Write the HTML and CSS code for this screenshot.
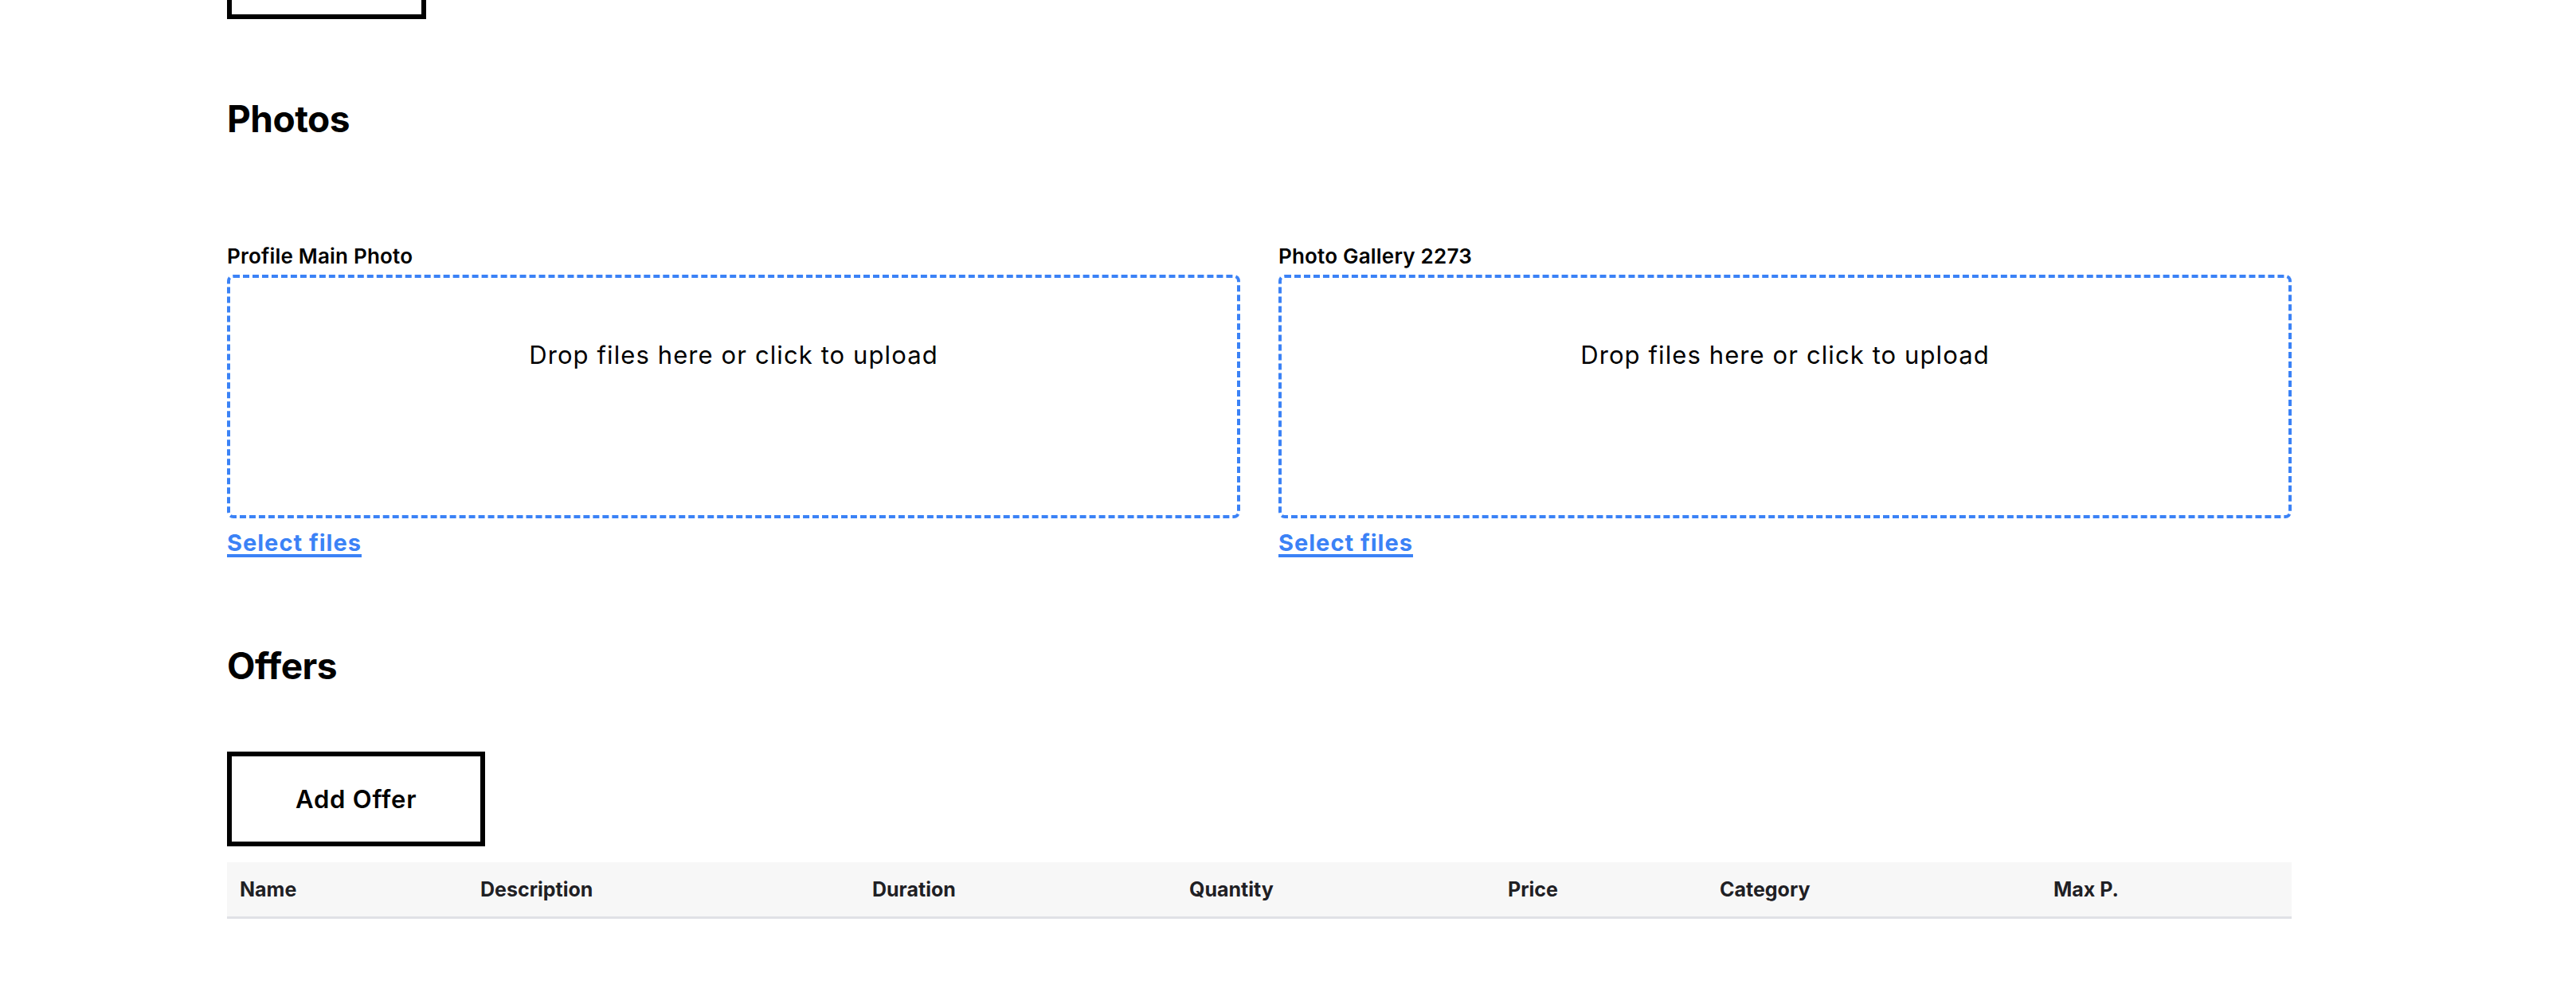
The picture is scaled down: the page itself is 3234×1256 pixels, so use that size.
FILE: index.html
```html
<!DOCTYPE html>
<html lang="en">
<head>
<meta charset="utf-8">
<title>Profile</title>
<link rel="stylesheet" href="styles.css">
</head>
<body>
<main class="page">
  <div class="top-action">
    <button class="outline-btn top-btn" type="button" aria-label="Save"></button>
  </div>

  <section class="section photos">
    <h2 class="section-title">Photos</h2>
    <div class="upload-grid">
      <div class="upload-field">
        <label class="field-label">Profile Main Photo</label>
        <div class="dropzone">
          <p class="dropzone-text">Drop files here or click to upload</p>
        </div>
        <a class="select-link" href="#">Select files</a>
      </div>
      <div class="upload-field">
        <label class="field-label">Photo Gallery 2273</label>
        <div class="dropzone">
          <p class="dropzone-text">Drop files here or click to upload</p>
        </div>
        <a class="select-link" href="#">Select files</a>
      </div>
    </div>
  </section>

  <section class="section offers">
    <h2 class="section-title">Offers</h2>
    <button class="outline-btn add-btn" type="button">Add Offer</button>
    <table class="offers-table">
      <thead>
        <tr>
          <th class="col-name">Name</th>
          <th class="col-desc">Description</th>
          <th class="col-duration">Duration</th>
          <th class="col-qty">Quantity</th>
          <th class="col-price">Price</th>
          <th class="col-cat">Category</th>
          <th class="col-max">Max P.</th>
        </tr>
      </thead>
      <tbody></tbody>
    </table>
  </section>
</main>
</body>
</html>
```

FILE: styles.css
```css
* { box-sizing: border-box; }

html, body {
  margin: 0;
  padding: 0;
  background: #ffffff;
  color: #000000;
  font-family: Inter, "Noto Sans", "Liberation Sans", sans-serif;
}

.page {
  width: 2592px;
  margin-left: 285px;
}

.top-action {
  display: flex;
}

.outline-btn {
  background: #ffffff;
  border: 6px solid #000000;
  border-radius: 0;
  font-family: inherit;
  color: #000000;
  cursor: pointer;
}

.top-btn {
  width: 250px;
  height: 120px;
  margin-top: -96px;
}

.section-title {
  margin: 0;
  font-size: 46px;
  line-height: 64px;
  font-weight: 700;
  letter-spacing: -0.5px;
}

.photos {
  margin-top: 93px;
}

.upload-grid {
  display: grid;
  grid-template-columns: 1fr 1fr;
  column-gap: 48px;
  margin-top: 123px;
}

.upload-field {
  display: flex;
  flex-direction: column;
  align-items: flex-start;
}

.field-label {
  font-size: 26px;
  line-height: 36px;
  font-weight: 600;
  letter-spacing: 0.2px;
  margin-bottom: 5px;
}

.dropzone {
  align-self: stretch;
  height: 306px;
  border: 4px dashed #3b82f6;
  border-radius: 8px;
  padding-top: 74px;
  text-align: center;
}

.dropzone-text {
  margin: 0;
  font-size: 31px;
  line-height: 45px;
  font-weight: 400;
  letter-spacing: 1.1px;
}

.select-link {
  margin-top: 11px;
  font-size: 29px;
  line-height: 40px;
  font-weight: 700;
  letter-spacing: 1px;
  color: #3b82f6;
  text-decoration: underline;
  text-decoration-thickness: 4px;
  text-underline-offset: 4px;
}

.offers {
  margin-top: 102px;
}

.add-btn {
  margin-top: 76px;
  padding: 31px 80px;
  font-size: 31px;
  line-height: 45px;
  font-weight: 600;
  letter-spacing: 0.8px;
}

.offers-table {
  margin-top: 20px;
  width: 100%;
  border-collapse: collapse;
  table-layout: fixed;
}

.offers-table thead tr {
  background: #f7f7f7;
  border-bottom: 3px solid #e0e1e6;
}

.offers-table th {
  text-align: left;
  padding: 16px 14px 16px 16px;
  font-size: 25px;
  line-height: 36px;
  font-weight: 700;
  color: #1f2024;
  white-space: nowrap;
}

.col-name { width: 302px; }
.col-desc { width: 492px; }
.col-duration { width: 398px; }
.col-qty { width: 400px; }
.col-price { width: 266px; }
.col-cat { width: 419px; }
.col-max { width: auto; }
```
